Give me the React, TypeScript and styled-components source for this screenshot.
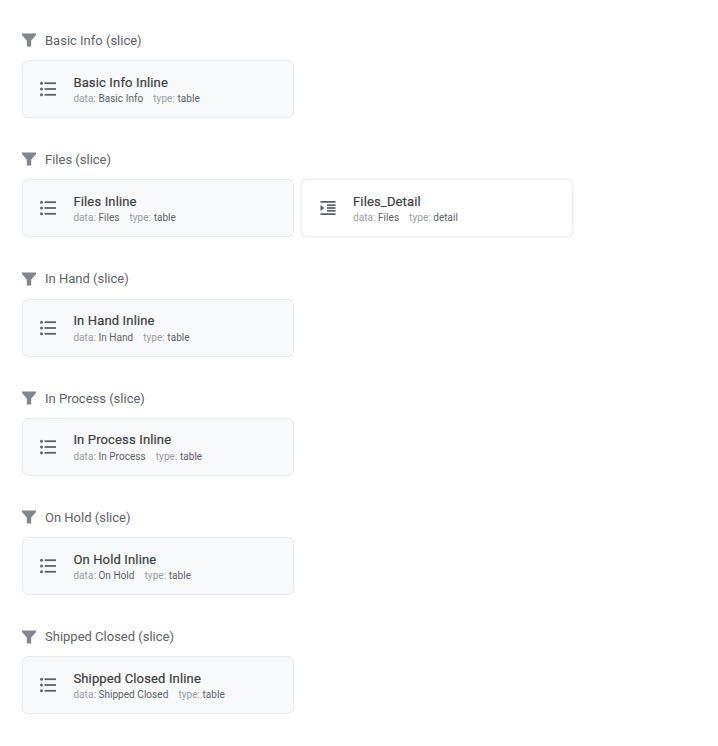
import React from "react";
import styled, { createGlobalStyle } from "styled-components";

const GlobalStyle = createGlobalStyle`
  html, body {
    margin: 0;
    padding: 0;
    background: #fff;
    font-family: Roboto, "Liberation Sans", sans-serif;
  }
`;

const Page = styled.div`
  display: flex;
  flex-direction: column;
  padding: 30px 0 0 22px;
`;

const Section = styled.section`
  display: flex;
  flex-direction: column;
  height: 119.3px;
`;

const SliceHeader = styled.div`
  display: flex;
  align-items: center;
  height: 20.3px;
  margin-bottom: 9.7px;
  gap: 9px;
  color: #5f6368;
  font-size: 13px;
`;

const Cards = styled.div`
  display: flex;
  gap: 7px;
`;

const Card = styled.div<{ $active?: boolean }>`
  box-sizing: border-box;
  display: flex;
  align-items: center;
  width: 272px;
  height: 58px;
  padding: 0 0 0 ${(p) => (p.$active ? "18px" : "17px")};
  gap: ${(p) => (p.$active ? "17px" : "17.4px")};
  border-radius: 6px;
  border: 1px solid ${(p) => (p.$active ? "#eceef0" : "#e8eaed")};
  background: ${(p) => (p.$active ? "#fff" : "#f8f9fa")};
  box-shadow: ${(p) => (p.$active ? "0 0 0 1px #f6f7f8" : "none")};
`;

const CardText = styled.div`
  display: flex;
  flex-direction: column;
  margin-top: 2.6px;
`;

const CardTitle = styled.div`
  color: #3c4043;
  font-size: 13px;
  line-height: 16px;
  margin-bottom: 0.4px;
  letter-spacing: 0.15px;
  -webkit-text-stroke: 0.2px #3c4043;
`;

const Meta = styled.div`
  display: flex;
  gap: 10px;
  font-size: 10px;
  line-height: 15px;
  letter-spacing: 0.05px;
  color: #9aa0a6;
`;

const MetaValue = styled.span`
  color: #5f6368;
`;

const FilterIcon = () => (
  <svg width="14" height="14" viewBox="0 0 14 14" fill="#80868b">
    <path d="M0 .5h14v1.6L9.2 7.4v6H4.8v-6L0 2.1z" />
  </svg>
);

const ListIcon = () => (
  <svg width="16" height="16" viewBox="0 0 16 16" fill="#5f6368">
    <circle cx="1.5" cy="2.2" r="1.5" />
    <circle cx="1.5" cy="8" r="1.5" />
    <circle cx="1.5" cy="13.8" r="1.5" />
    <rect x="4.6" y="1.3" width="11.4" height="1.8" />
    <rect x="4.6" y="7.1" width="11.4" height="1.8" />
    <rect x="4.6" y="12.9" width="11.4" height="1.8" />
  </svg>
);

const DetailIcon = () => (
  <svg width="16" height="16" viewBox="0 0 16 16" fill="#5f6368">
    <rect x="0.5" y="1" width="15" height="1.8" />
    <rect x="7" y="4.3" width="8.5" height="1.8" />
    <rect x="7" y="7.1" width="8.5" height="1.8" />
    <rect x="7" y="9.9" width="8.5" height="1.8" />
    <rect x="0.5" y="13.2" width="15" height="1.8" />
    <path d="M0.5 5l4 3-4 3z" />
  </svg>
);

type View = { name: string; data: string; type: string; active?: boolean };

const slices: { title: string; views: View[] }[] = [
  { title: "Basic Info (slice)", views: [{ name: "Basic Info Inline", data: "Basic Info", type: "table" }] },
  {
    title: "Files (slice)",
    views: [
      { name: "Files Inline", data: "Files", type: "table" },
      { name: "Files_Detail", data: "Files", type: "detail", active: true },
    ],
  },
  { title: "In Hand (slice)", views: [{ name: "In Hand Inline", data: "In Hand", type: "table" }] },
  { title: "In Process (slice)", views: [{ name: "In Process Inline", data: "In Process", type: "table" }] },
  { title: "On Hold (slice)", views: [{ name: "On Hold Inline", data: "On Hold", type: "table" }] },
  { title: "Shipped Closed (slice)", views: [{ name: "Shipped Closed Inline", data: "Shipped Closed", type: "table" }] },
];

const App: React.FunctionComponent = () => {
  return (
    <Page>
      <GlobalStyle />
      {slices.map((s) => (
        <Section key={s.title}>
          <SliceHeader>
            <FilterIcon />
            <span>{s.title}</span>
          </SliceHeader>
          <Cards>
            {s.views.map((v) => (
              <Card key={v.name} $active={v.active}>
                {v.type === "detail" ? <DetailIcon /> : <ListIcon />}
                <CardText>
                  <CardTitle>{v.name}</CardTitle>
                  <Meta>
                    <span>
                      data: <MetaValue>{v.data}</MetaValue>
                    </span>
                    <span>
                      type: <MetaValue>{v.type}</MetaValue>
                    </span>
                  </Meta>
                </CardText>
              </Card>
            ))}
          </Cards>
        </Section>
      ))}
    </Page>
  );
};

export default App;
